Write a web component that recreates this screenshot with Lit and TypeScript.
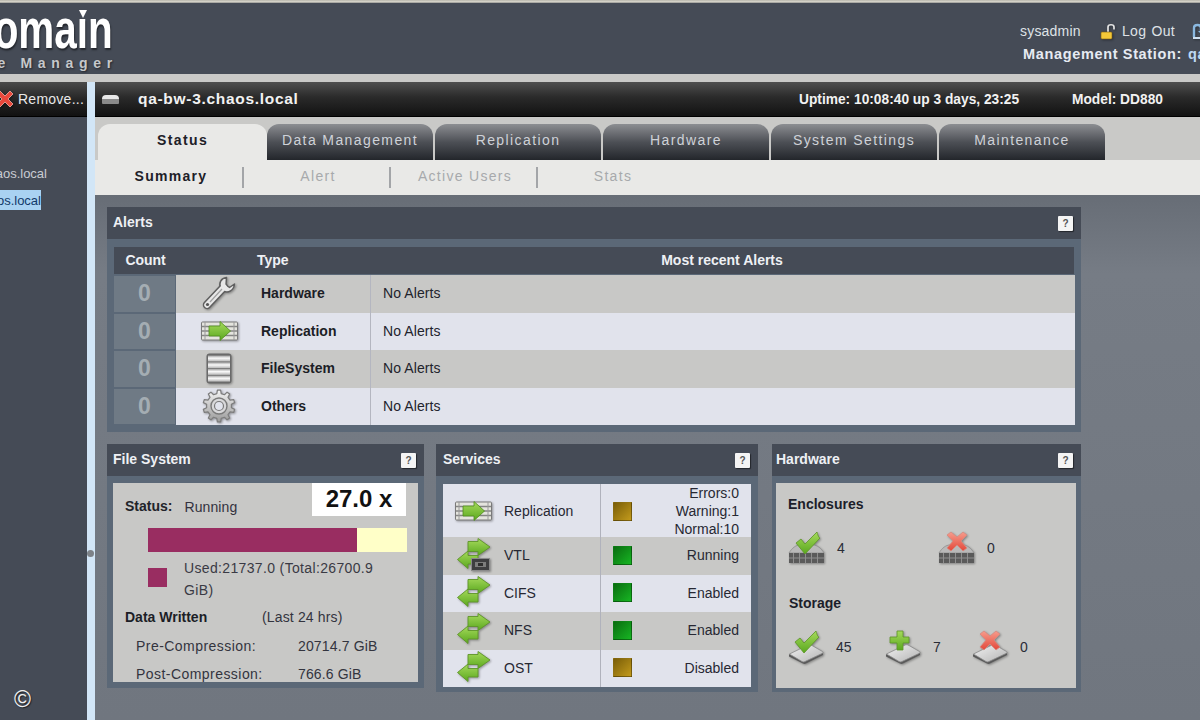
import { LitElement, html, css, svg } from "lit";
import { customElement } from "lit/decorators.js";

const defs = svg`
<linearGradient id="gArrow" x1="0" y1="0" x2="0" y2="1"><stop offset="0" stop-color="#a6da5c"/><stop offset="1" stop-color="#5aa81e"/></linearGradient>
<linearGradient id="gMetal" x1="0" y1="0" x2="0" y2="1"><stop offset="0" stop-color="#f4f4f4"/><stop offset="1" stop-color="#9a9a9a"/></linearGradient>
<linearGradient id="gBar" x1="0" y1="0" x2="0" y2="1"><stop offset="0" stop-color="#a0a0a0"/><stop offset=".45" stop-color="#fafafa"/><stop offset="1" stop-color="#b4b4b4"/></linearGradient>
<linearGradient id="gSlab" x1="0" y1="0" x2="1" y2="1"><stop offset="0" stop-color="#f2f2f2"/><stop offset="1" stop-color="#b4b4b4"/></linearGradient>
<linearGradient id="gRed" x1="0" y1="0" x2="0" y2="1"><stop offset="0" stop-color="#f79c8c"/><stop offset="1" stop-color="#e2483a"/></linearGradient>
`;

function gearPath(cx: number, cy: number, rOut: number, rIn: number, teeth: number) {
  const pts: string[] = [];
  const step = (Math.PI * 2) / teeth;
  for (let i = 0; i < teeth; i++) {
    const a = i * step - Math.PI / 2;
    const seq: [number, number][] = [
      [a - step * 0.28, rIn],
      [a - step * 0.16, rOut],
      [a + step * 0.16, rOut],
      [a + step * 0.28, rIn],
    ];
    for (const [ang, r] of seq) {
      pts.push(`${(cx + Math.cos(ang) * r).toFixed(2)} ${(cy + Math.sin(ang) * r).toFixed(2)}`);
    }
  }
  return `M${pts.join("L")}Z`;
}

const wrench = html`<svg class="ic" width="36" height="36" viewBox="0 0 36 36"><path d="M6 30L23 12" stroke="#5f5f5f" stroke-width="8.500" stroke-linecap="round"/><path d="M25.500 2.500C20 3 17.500 8 19.500 13L22.500 16C27 18.500 33 15.500 33.500 9L28.500 12.500L25 10L25.500 2.500Z" fill="#e6e6e6" stroke="#5f5f5f" stroke-width="1.500" stroke-linejoin="round"/><path d="M6 30L23 12" stroke="#e8e8e8" stroke-width="5.500" stroke-linecap="round"/><path d="M9 27L21 14" stroke="#a0a0a0" stroke-width="1.200"/><circle cx="6.500" cy="29.500" r="1.600" fill="#555"/></svg>`;

const replication = html`<svg class="ic" width="37" height="20" viewBox="0 0 37 20"><rect x="0.500" y="1" width="36" height="18" rx="1" fill="#e4e4de" stroke="#7a7a7a"/><path d="M1 5.500H36M1 10H36M1 14.500H36" stroke="#858585" stroke-width="1.500"/><path d="M4 1V19M33 1V19" stroke="#9a9a9a"/><path d="M8 5H19V0.500L29.500 10L19 19.500V15H8Z" fill="url(#gArrow)" stroke="#4f8c1c" stroke-width="0.800"/></svg>`;

const filesys = html`<svg class="ic" width="26" height="31" viewBox="0 0 26 31"><rect x="0.500" y="0.500" width="25" height="30" rx="3" fill="#6a6a6a"/><rect x="2" y="2.500" width="22" height="6" fill="url(#gBar)"/><rect x="2" y="9.200" width="22" height="6" fill="url(#gBar)"/><rect x="2" y="15.900" width="22" height="6" fill="url(#gBar)"/><rect x="2" y="22.600" width="22" height="6" fill="url(#gBar)"/></svg>`;

const gear = html`<svg class="ic" width="34" height="34" viewBox="0 0 34 34"><path d="${gearPath(17, 17, 16, 12.500, 10)}" fill="url(#gMetal)" stroke="#7d7d7d" stroke-width="1.200" stroke-linejoin="round"/><circle cx="17" cy="17" r="8" fill="#d8d8da" stroke="#7a7a7a" stroke-width="1.400"/><circle cx="17" cy="17" r="4.500" fill="#e1e3ec" stroke="#7a7a7a" stroke-width="1.200"/></svg>`;

const arrows = (tape = false) => html`<svg class="ic" width="34" height="34" viewBox="0 0 34 34"><path d="M21 17.500H11V13L0.500 21.500L11 30.500V26H21Z" fill="url(#gArrow)" stroke="#5d9428" stroke-width="0.900" stroke-linejoin="round"/><path d="M11 3.500H21V0.500L33 9L21 17.500V13.500H11Z" fill="url(#gArrow)" stroke="#5d9428" stroke-width="0.900" stroke-linejoin="round"/>${tape ? svg`<rect x="14.500" y="20.500" width="18" height="12" fill="#3e3e40" stroke="#8a8a8a"/><rect x="18" y="24" width="11" height="5" fill="#7d7d7d"/><rect x="21" y="25" width="5" height="3" fill="#2e2e2e"/>` : ""}</svg>`;

const checkMark = svg`<path d="M4 12L9 8L13 13L25 1C26 5 27 7 28 7L13 23Z" fill="url(#gArrow)" stroke="#5d9428" stroke-width="0.800" stroke-linejoin="round"/>`;
const crossMark = svg`<path d="M5 4L9 1L15 6L21 1L25 4L19 10L25 17L21 20L15 14L9 20L5 17L11 10Z" fill="url(#gRed)" stroke="#d58a80" stroke-width="0.800" stroke-linejoin="round"/>`;
const plusMark = svg`<path d="M9 1H15V7H21V13H15V20H9V13H2V7H9Z" fill="url(#gArrow)" stroke="#5d9428" stroke-width="0.800" stroke-linejoin="round"/>`;

const enclosure = (mark: any, dx = 4) => html`<svg class="ic" width="37" height="33" viewBox="0 0 37 33"><path d="M1 22C4 17 8 14 12 14H25C29 14 33 17 36 22Z" fill="#b9b9b9" stroke="#8a8a8a" stroke-width="0.700"/><rect x="1" y="22" width="35" height="10" fill="#5a5a5a"/><path d="M5.500 22V32M11.500 22V32M17.500 22V32M23.500 22V32M29.500 22V32M1 27H36" stroke="#8e8e8e" stroke-width="1"/><g transform="translate(${dx} 0)">${mark}</g></svg>`;

const disk = (mark: any, dx = 3) => html`<svg class="ic" width="36" height="34" viewBox="0 0 36 34"><path d="M1 26.500L15 33.500C16 34 17 34 18 33.500L35 25V22L15 31L1 24Z" fill="#5a5a5a"/><path d="M1.500 24L19 15.500C21 14.500 22.500 14.500 24 15.500L34.500 21.500C35.500 22.500 35 23 34 23.500L17 31.500C16 32 15 32 14 31.500Z" fill="url(#gSlab)" stroke="#8a8a8a" stroke-width="0.800"/><g transform="translate(${dx} 0)">${mark}</g></svg>`;

const remove = html`<svg class="ic" width="18" height="18" viewBox="0 0 18 18"><path d="M1 4L4 1L9 6L14 1L17 4L12 9L17 14L14 17L9 12L4 17L1 14L6 9Z" fill="#e8483c" stroke="#f3b0a8" stroke-width="0.800"/></svg>`;
const lock = html`<svg class="ic" width="16" height="17" viewBox="0 0 16 17"><path d="M8 9V4C8 1 14 1 14 4V6.500" fill="none" stroke="#e4e4e4" stroke-width="1.700"/><rect x="1" y="9" width="11" height="7" rx="1" fill="#f4c838" stroke="#7a5a10" stroke-width="0.600"/></svg>`;
const station = html`<svg class="ic" width="14" height="17" viewBox="0 0 14 17"><path d="M2 14V5C2 1 9 1 9 5V8" fill="none" stroke="#8ab8e0" stroke-width="2.400"/><path d="M6 8H12L9 11Z" fill="#8ab8e0"/><path d="M1 15H12" stroke="#cfe0f0" stroke-width="2"/></svg>`;

@customElement("app-root")
export class AppRoot extends LitElement {
  static styles = css`
    :host { display: block; width: 1200px; height: 720px; overflow: hidden; position: relative; background: #c9c9c7; font-family: "Liberation Sans", Arial, sans-serif; font-size: 14px; color: #22242a; }
    * { box-sizing: border-box; }
    .ic { display: block; flex: none; filter: drop-shadow(1px 1px 1px rgba(0,0,0,.35)); }
    .defs { position: absolute; width: 0; height: 0; }

    .topline { height: 3px; background: linear-gradient(#b8b6ac, #d9d7cd 60%, #8a8a88); }
    .header { height: 71px; background: #454b56; display: flex; justify-content: space-between; overflow: hidden; }
    .logo { width: 114px; flex: none; overflow: hidden; position: relative; }
    .logo-word { position: absolute; right: 1px; top: 1px; font-size: 55px; line-height: 50px; font-weight: 700; color: #fff; white-space: nowrap; transform: scaleX(0.735); transform-origin: right center; text-shadow: 1px 2px 2px #23262c; }
    .logo-tri { position: absolute; left: 79px; top: 7px; width: 0; height: 0; border-left: 4px solid transparent; border-right: 4px solid transparent; border-top: 8px solid #fff; }
    .logo-sub { position: absolute; right: 1px; top: 53px; font-size: 14px; line-height: 15px; font-weight: 700; letter-spacing: 5.700px; margin-right: -5px; color: #c6c8ca; white-space: nowrap; text-shadow: 1px 1px 2px #23262c; }
    .hright { width: 180px; flex: none; padding-top: 18px; }
    .huser { display: flex; align-items: center; height: 20px; color: #dfe2e6; font-size: 14px; }
    .huser > * { flex: none; }
    .huser .name { width: 80px; letter-spacing: .2px; }
    .huser .lo { width: 70px; letter-spacing: .3px; word-spacing: 1px; }
    .huser .lk { margin-right: 6px; }
    .hstation { margin: 5px 0 0 3px; font-weight: 700; font-size: 14.500px; line-height: 17px; color: #e6eaf2; white-space: nowrap; letter-spacing: .65px; }
    .hstation span { margin-left: 6px; color: #bcd8f4; }
    .gap { height: 8px; background: #c9c9c7; }

    .body { display: grid; grid-template-columns: 87px 8px 1fr; height: 638px; }
    .side { background: #454b56; display: flex; flex-direction: column; position: relative; }
    .sidebar-tool { height: 35px; background: linear-gradient(#4a4a4a, #262626 50%, #111); border-bottom: 1px solid #000; display: flex; align-items: center; gap: 4px; color: #e8e8e8; white-space: nowrap; font-size: 14px; letter-spacing: .25px; overflow: hidden; }
    .sidebar-tool .ic { margin-left: -4px; }
    .tree { padding-top: 46px; display: flex; flex-direction: column; gap: 7px; }
    .node { width: 47px; height: 20px; overflow: hidden; display: flex; justify-content: flex-end; align-items: center; color: #c9ccd2; font-size: 13px; white-space: nowrap; }
    .node.sel { width: 41px; background: #a9d2f2; color: #123a6a; }
    .copy { position: absolute; left: 14px; bottom: 8px; color: #f0f0f0; font-size: 23px; line-height: 26px; text-shadow: 1px 1px 1px #1c1f24; }
    .strip { background: #d2e6f7; position: relative; }
    .handle { position: absolute; left: 0; top: 468px; width: 7px; height: 7px; border-radius: 50%; background: #7d8288; }

    .main { display: flex; flex-direction: column; min-width: 0; }
    .titlebar { height: 35px; background: linear-gradient(#4f4f4f, #2a2a2a 45%, #121212); border-bottom: 1px solid #000; display: flex; align-items: center; color: #f2f2f2; font-weight: 700; white-space: nowrap; }
    .minus { width: 17px; height: 9px; margin-left: 7px; background: linear-gradient(#e8e8e8 50%, #8a8a8a 50%); border-radius: 4px 4px 1px 1px; flex: none; }
    .host { margin-left: 19px; font-size: 15.500px; letter-spacing: .7px; width: 661px; flex: none; }
    .uptime { width: 273px; font-size: 13.750px; flex: none; }
    .tabs { height: 43px; padding: 7px 0 0 3px; display: flex; gap: 2px; background: #c9c9c7; }
    .tab { width: 166px; border-radius: 12px 12px 0 0; background: linear-gradient(#8c8e92, #4d5056 50%, #23262b); color: #cfd2d8; text-align: center; line-height: 32px; letter-spacing: 1.400px; font-size: 14px; }
    .tab.on { width: 169px; margin-right: -2px; background: #e9e9e7; color: #1d2028; font-weight: 700; }
    .subs { height: 35px; background: #e9e9e7; display: flex; padding-left: 2px; align-items: center; }
    .sub { width: 147px; padding-left: 3px; text-align: center; border-right: 2px solid #a3a5a8; height: 21px; line-height: 19px; color: #a7a9ac; letter-spacing: 1.300px; font-size: 14px; }
    .sub.on { color: #1d2028; font-weight: 700; }
    .sub.last { border-right: 0; }
    .content { flex: 1; background: linear-gradient(#676d76, #767c85 15%, #70767f); padding: 12px 0 0 12px; min-height: 0; }

    .panel { background: #5b6877; display: flex; flex-direction: column; overflow: hidden; }
    .phead { height: 32px; flex: none; background: #454b56; color: #eef0f4; font-weight: 700; font-size: 14px; display: flex; align-items: center; justify-content: space-between; padding: 0 8px 3px 6px; }
    .help { width: 15px; height: 15px; margin-top: 3px; background: #f4f4f4; border-radius: 1px; color: #555; font-size: 10px; font-weight: 700; text-align: center; line-height: 15px; box-shadow: 1px 1px 1px #23262c; }
    .alerts { width: 974px; height: 225px; }
    .alerts .inner { padding: 7px 6px 6px; }
    .thead { height: 29px; padding-bottom: 2px; background: #454b56; display: grid; grid-template-columns: 63px 196px 1fr; align-items: center; color: #eef0f4; font-weight: 700; border: 1px solid #5b6877; }
    .thead .c1 { text-align: center; letter-spacing: -.1px; }
    .thead .c2 { padding-left: 80px; }
    .thead .c3 { text-align: center; padding-right: 3px; }
    .arow { display: grid; grid-template-columns: 63px 195px 1fr; height: 37.500px; }
    .count { background: #6f7a85; color: #a4adb3; font-size: 23px; font-weight: 700; text-align: center; line-height: 35px; margin: 1px; }
    .arow .type { display: grid; grid-template-columns: 85px 1fr; align-items: center; font-weight: 700; color: #1c1e26; border-right: 1px solid #b4b6c0; padding-bottom: 1px; }
    .arow .msg { display: flex; align-items: center; padding: 0 0 1px 12px; color: #22242c; letter-spacing: .1px; }
    .arow .icw { display: flex; justify-content: center; padding-left: 1px; }
    .odd { background: #c8c8c6; }
    .even { background: #e1e3ec; }

    .row3 { display: flex; margin-top: 12px; align-items: flex-start; }
    .fs { width: 317px; height: 244px; }
    .sv { width: 322px; height: 248px; margin-left: 12px; }
    .sv .phead { padding-left: 7px; }
    .hw { width: 309px; height: 248px; margin-left: 14px; }
    .hw .phead { padding-left: 4px; }
    .fs .inner { margin: 7px 6px 6px; height: 199px; background: #c8c8c6; position: relative; overflow: hidden; padding: 0 11px 0 12px; }
    .ratio { position: absolute; right: 12px; top: 0; width: 94px; height: 33px; background: #fff; color: #111; font-size: 24px; font-weight: 700; text-align: center; line-height: 31px; }
    .st { height: 45px; padding-top: 15px; display: flex; gap: 12px; align-items: baseline; }
    .st b { font-size: 14px; }
    .st span { color: #33323e; position: relative; top: 1px; letter-spacing: .1px; }
    .bar { margin-left: 23px; width: 259px; height: 24px; background: #ffffc8; }
    .bar div { height: 100%; background: #992d61; }
    .legend { display: grid; grid-template-columns: 36px 215px; margin: 5px 0 0 23px; line-height: 22px; color: #3a3a44; height: 44px; letter-spacing: .35px; }
    .swatch { width: 19px; height: 19px; background: #992d61; margin-top: 11px; }
    .dw { display: grid; grid-template-columns: 137px 1fr; margin-top: 6px; line-height: 20px; }
    .dw b { color: #1c1e26; }
    .dw span { letter-spacing: .15px; color: #33343e; }
    .kv { display: grid; grid-template-columns: 162px 1fr; margin: 9px 0 0 11px; line-height: 20px; color: #33343e; letter-spacing: .15px; }
    .kv span:first-child { letter-spacing: .45px; }
    .kv + .kv { margin-top: 8px; }

    .sv .inner { margin: 8px 7px 0; display: flex; flex-direction: column; }
    .srow { display: grid; grid-template-columns: 158px 1fr; height: 37.500px; }
    .srow.tall { height: 53px; }
    .sname { display: grid; grid-template-columns: 61px 1fr; align-items: center; border-right: 1px solid #b0b2bc; color: #272833; padding-bottom: 1px; }
    .sname .icw { display: flex; justify-content: center; }
    .sstat { display: flex; align-items: center; justify-content: space-between; padding: 0 12px; color: #272833; padding-bottom: 1px; }
    .led { width: 19px; height: 19px; flex: none; border: 1px solid rgba(0,0,0,.2); }
    .led.g { background: linear-gradient(135deg, #0a6d10, #17b523); }
    .led.y { background: linear-gradient(135deg, #7a5e08, #c29a1c); }
    .stext { text-align: right; line-height: 18px; }

    .hw .inner { margin: 7px 5px 0 4px; height: 205px; background: #c8c8c6; padding: 0 0 0 12px; }
    .hw h4 { margin: 0; font-size: 14px; font-weight: 700; line-height: 18px; color: #1c1e2a; }
    .h1 { padding-top: 12px; }
    .h2 { padding-top: 30px; padding-left: 1px; }
    .items { display: flex; align-items: center; margin-top: 18px; color: #2a2c36; }
    .items.two { margin-top: 18px; }
    .it { display: flex; align-items: center; gap: 12px; }
    .w150 { width: 150px; }
    .w97 { width: 97px; }
    .w87 { width: 87px; }
  `;

  help() { return html`<div class="help">?</div>`; }

  render() {
    const alerts = [
      ["Hardware", wrench, "odd"],
      ["Replication", replication, "even"],
      ["FileSystem", filesys, "odd"],
      ["Others", gear, "even"],
    ];
    const services = [
      ["Replication", replication, "y", html`Errors:0<br />Warning:1<br />Normal:10`, "even tall"],
      ["VTL", arrows(true), "g", "Running", "odd"],
      ["CIFS", arrows(), "g", "Enabled", "even"],
      ["NFS", arrows(), "g", "Enabled", "odd"],
      ["OST", arrows(), "y", "Disabled", "even"],
    ];
    return html`
      <svg class="defs"><defs>${defs}</defs></svg>
      <div class="topline"></div>
      <header class="header">
        <div class="logo">
          <div class="logo-word">Domaın</div>
          <div class="logo-tri"></div>
          <div class="logo-sub">Device Manager</div>
        </div>
        <div class="hright">
          <div class="huser">
            <span class="name">sysadmin</span><span class="lk">${lock}</span><span class="lo">Log Out</span>${station}
          </div>
          <div class="hstation">Management Station:<span>qa-bw-3.chaos.local</span></div>
        </div>
      </header>
      <div class="gap"></div>
      <div class="body">
        <aside class="side">
          <div class="sidebar-tool">${remove}<span>Remove...</span></div>
          <div class="tree">
            <div class="node">qa-bw-1.chaos.local</div>
            <div class="node sel">qa-bw-3.chaos.local</div>
          </div>
          <div class="copy">©</div>
        </aside>
        <div class="strip"><div class="handle"></div></div>
        <main class="main">
          <div class="titlebar">
            <div class="minus"></div>
            <div class="host">qa-bw-3.chaos.local</div>
            <div class="uptime">Uptime: 10:08:40 up 3 days, 23:25</div>
            <div class="uptime">Model: DD880</div>
          </div>
          <div class="tabs">
            <div class="tab on">Status</div>
            <div class="tab">Data Management</div>
            <div class="tab">Replication</div>
            <div class="tab">Hardware</div>
            <div class="tab">System Settings</div>
            <div class="tab">Maintenance</div>
          </div>
          <div class="subs">
            <div class="sub on">Summary</div>
            <div class="sub">Alert</div>
            <div class="sub">Active Users</div>
            <div class="sub last">Stats</div>
          </div>
          <div class="content">
            <section class="panel alerts">
              <div class="phead"><span>Alerts</span>${this.help()}</div>
              <div class="inner">
                <div class="thead"><div class="c1">Count</div><div class="c2">Type</div><div class="c3">Most recent Alerts</div></div>
                ${alerts.map(([n, ic, cls]) => html`
                  <div class="arow">
                    <div class="count">0</div>
                    <div class="type ${cls}"><div class="icw">${ic}</div><div>${n}</div></div>
                    <div class="msg ${cls}">No Alerts</div>
                  </div>`)}
              </div>
            </section>
            <div class="row3">
              <section class="panel fs">
                <div class="phead"><span>File System</span>${this.help()}</div>
                <div class="inner">
                  <div class="ratio">27.0 x</div>
                  <div class="st"><b>Status:</b><span>Running</span></div>
                  <div class="bar"><div style="width:${(209 / 259) * 100}%"></div></div>
                  <div class="legend"><div class="swatch"></div><div>Used:21737.0 (Total:26700.9 GiB)</div></div>
                  <div class="dw"><b>Data Written</b><span>(Last 24 hrs)</span></div>
                  <div class="kv"><span>Pre-Compression:</span><span>20714.7 GiB</span></div>
                  <div class="kv"><span>Post-Compression:</span><span>766.6 GiB</span></div>
                </div>
              </section>
              <section class="panel sv">
                <div class="phead"><span>Services</span>${this.help()}</div>
                <div class="inner">
                  ${services.map(([n, ic, led, st, cls]) => html`
                    <div class="srow ${cls}">
                      <div class="sname"><div class="icw">${ic}</div><div>${n}</div></div>
                      <div class="sstat"><div class="led ${led}"></div><div class="stext">${st}</div></div>
                    </div>`)}
                </div>
              </section>
              <section class="panel hw">
                <div class="phead"><span>Hardware</span>${this.help()}</div>
                <div class="inner">
                  <div class="h1"><h4>Enclosures</h4></div>
                  <div class="items">
                    <div class="it w150">${enclosure(checkMark)}<span>4</span></div>
                    <div class="it">${enclosure(crossMark)}<span>0</span></div>
                  </div>
                  <div class="h2"><h4>Storage</h4></div>
                  <div class="items two">
                    <div class="it w97">${disk(checkMark)}<span>45</span></div>
                    <div class="it w87">${disk(plusMark)}<span>7</span></div>
                    <div class="it">${disk(crossMark)}<span>0</span></div>
                  </div>
                </div>
              </section>
            </div>
          </div>
        </main>
      </div>
    `;
  }
}
